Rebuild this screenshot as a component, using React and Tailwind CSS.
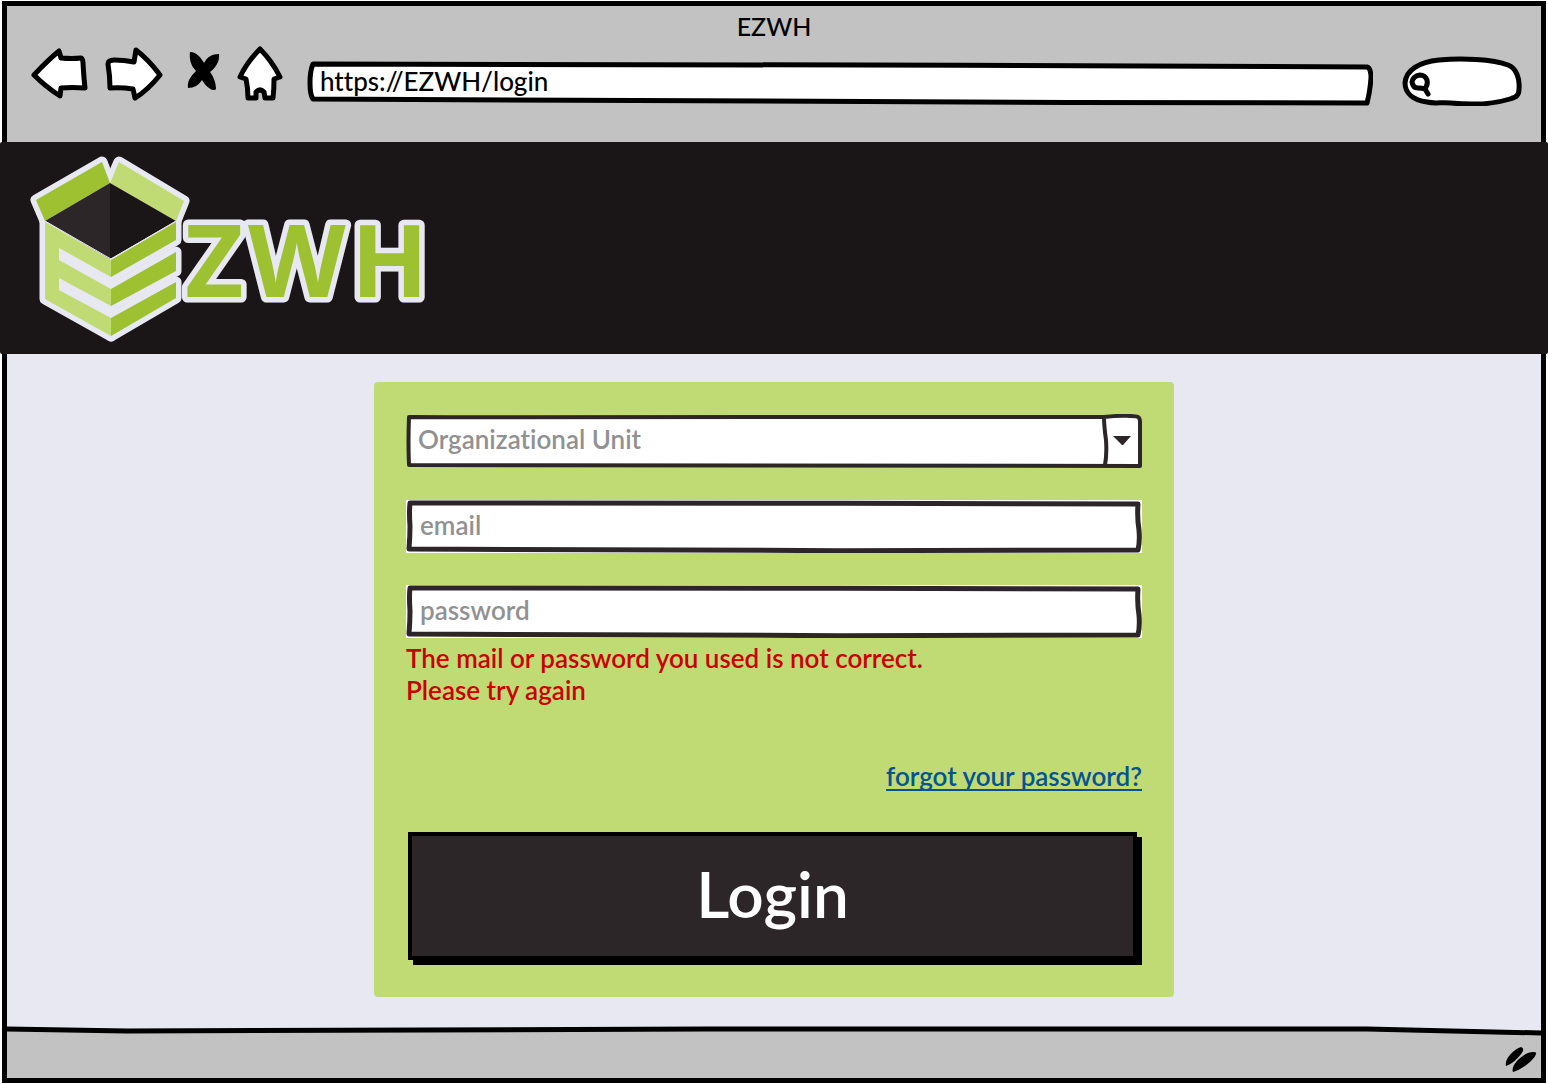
const ink = "#2d2628";

function SketchFrame({ width, height, d, stroke, strokeWidth }) {
  return (
    <svg
      className="pointer-events-none absolute inset-0 h-full w-full"
      viewBox={`0 0 ${width} ${height}`}
      preserveAspectRatio="none"
      aria-hidden="true"
    >
      <path
        d={d}
        fill="#fff"
        stroke={stroke}
        strokeWidth={strokeWidth}
        strokeLinejoin="round"
        vectorEffect="non-scaling-stroke"
      />
    </svg>
  );
}

function NavIcon({ viewBox, className, d, solid }) {
  return (
    <svg className={className} viewBox={viewBox} aria-hidden="true">
      <path
        d={d}
        fill={solid ? "#000" : "#fff"}
        stroke="#000"
        strokeWidth={solid ? 0 : 5}
        strokeLinejoin="round"
      />
    </svg>
  );
}

function BrowserBar() {
  return (
    <header className="h-34 bg-[#c2c2c2] pt-1">
      <h1 className="text-center text-[25px] leading-8 font-medium">EZWH</h1>
      <div className="mt-1 flex h-15 items-stretch pr-[18px] pl-6">
        <button type="button" aria-label="Back" className="mr-4">
          <NavIcon
            className="h-15 w-[58px]"
            viewBox="31 46 58 60"
            d="M34 75Q47 61 59 51L61 58Q72 59 81 58Q83 59 83 63Q84 80 85 88Q72 87 61 88L60 96Q46 87 34 75Z"
          />
        </button>
        <button type="button" aria-label="Forward" className="mr-6">
          <NavIcon
            className="h-15 w-[58px]"
            viewBox="105 46 58 60"
            d="M108 64Q108 60 114 60Q124 60 134 62L136 50Q149 60 160 75Q148 90 135 98L133 89Q121 87 110 88Q110 76 108 64Z"
          />
        </button>
        <button type="button" aria-label="Stop" className="mr-4">
          <NavIcon
            solid
            className="h-15 w-[34px]"
            viewBox="187 46 34 60"
            d="M190 52C197 52 201 58 204 63C207 57 212 54 219 54C220 62 215 68 210 72C213 76 216 82 216 89C215 91 211 90 209 88C206 86 203 82 202 80C199 85 194 88 188 88C187 81 191 76 196 71C191 66 189 59 190 52Z"
          />
        </button>
        <button type="button" aria-label="Home" className="mr-6">
          <NavIcon
            className="h-15 w-[46px]"
            viewBox="237 46 46 60"
            d="M260 49Q272 61 280 77L274 79Q274 90 273 98H265L264 92Q260 88 256 92L256 98H248Q248 88 246 79L240 77Q247 62 260 49Z"
          />
        </button>
        <div className="relative flex-1">
          <SketchFrame
            width={1067}
            height={60}
            stroke="#000"
            strokeWidth={5}
            d="M6 18C400 17 700 20 1061 21Q1065 22 1065 32Q1064 46 1061 57C700 57 300 54 6 53Q3 49 3 37Q3 25 6 18Z"
          />
          <input
            aria-label="Address"
            type="text"
            defaultValue="https://EZWH/login"
            className="relative h-full w-full bg-transparent pt-2.5 pr-3 pl-[13px] text-[26px] font-medium outline-none"
          />
        </div>
        <div className="relative ml-7 w-[122px]">
          <SketchFrame
            width={122}
            height={60}
            stroke="#000"
            strokeWidth={5}
            d="M4 37C5 24 18 16 38 14C60 12 92 13 107 19C115 22 119 32 118 43C118 50 115 51 109 53C93 58 70 59 50 57C40 56 34 58 26 56C12 54 4 47 4 37Z"
          />
          <svg className="pointer-events-none absolute inset-0 h-15 w-[122px]" viewBox="1402 46 122 60" aria-hidden="true">
            <path
              d="M1427 87Q1429 84 1428 80Q1426 75 1421 75Q1414 76 1413 82Q1414 88 1419 88Q1423 88 1426 89L1429 94"
              fill="#fff"
              stroke="#000"
              strokeWidth="5"
              strokeLinecap="round"
              strokeLinejoin="round"
            />
          </svg>
          <input
            aria-label="Search"
            type="search"
            className="relative h-full w-full bg-transparent pt-3 pr-4 pl-8 text-base outline-none"
          />
        </div>
      </div>
    </header>
  );
}

function Logo() {
  return (
    <svg className="h-[190px] w-[398px]" viewBox="30 154 398 190" role="img" aria-label="EZWH">
      <g stroke="#e8e8f3" strokeWidth="11" strokeLinejoin="round" fill="#e8e8f3">
        <path d="M102 162L36 200L45 221L110 183Z" />
        <path d="M119 162L184 201L176 221L110 183Z" />
        <path d="M45 222L110 259L176 222V240L111 277V336L45 299Z" />
        <path d="M111 289L176 252V271L111 306Z" />
        <path d="M111 318L176 282V298L111 336Z" />
      </g>
      <path d="M102 162L36 200L45 221L110 183Z" fill="#9dc131" />
      <path d="M119 162L184 201L176 221L110 183Z" fill="#c1db74" />
      <path d="M110 183L45 221L110 259Z" fill="#2d2628" />
      <path d="M110 183L176 221L110 259Z" fill="#1a1617" />
      <path d="M45 222L111 260V277L59 248V260L111 289V306L59 278V290L111 318V336L45 299Z" fill="#c1db74" />
      <path d="M111 260L176 222V240L111 277ZM111 289L176 252V271L111 306ZM111 318L176 282V298L111 336Z" fill="#9dc131" />
      <path d="M45 221L111 259L176 221" fill="none" stroke="#e8e8f3" strokeWidth="1" />
      <text
        x="185 248 351"
        y="297"
        fontFamily="'Open Sans', sans-serif"
        fontWeight="700"
        fontSize="101"
        fill="#9dc131"
        stroke="#e8e8f3"
        strokeWidth="11"
        strokeLinejoin="round"
        paintOrder="stroke"
      >
        ZWH
      </text>
    </svg>
  );
}

function TextField({ label, type }) {
  return (
    <div className="relative h-[53px] bg-white">
      <SketchFrame
        width={736}
        height={53}
        stroke={ink}
        strokeWidth={5}
        d="M4 3C200 2 500 4 732 4Q731 18 733 30Q734 42 732 50C500 51 200 51 3 49Q4 36 4 26Q3 12 4 3Z"
      />
      <input
        aria-label={label}
        type={type}
        placeholder={label}
        className="relative h-full w-full bg-transparent px-3.5 pb-1 text-[26px] outline-none placeholder:text-[#919191] placeholder:opacity-100"
      />
    </div>
  );
}

function LoginForm() {
  return (
    <form className="flex w-full max-w-[800px] flex-col rounded-sm bg-[#c1db74] p-8" onSubmit={(e) => e.preventDefault()}>
      <div className="relative h-[54px]">
        <SketchFrame
          width={736}
          height={54}
          stroke={ink}
          strokeWidth={4}
          d="M3 3C250 4 500 3 698 3C715 1 730 2 732 3Q734 4 734 8V52C500 51 250 52 3 51Q2 28 3 3ZM698 3Q698 12 700 26Q701 40 699 51"
        />
        <select
          aria-label="Organizational Unit"
          defaultValue=""
          className="relative h-full w-full appearance-none bg-transparent pr-12 pb-1 pl-3 text-[26px] text-[#919191] outline-none"
        >
          <option value="">Organizational Unit</option>
        </select>
        <svg className="pointer-events-none absolute top-5 right-2.5 h-3 w-5" viewBox="0 0 20 12" aria-hidden="true">
          <path d="M1 2H19L11 11H10Z" fill={ink} />
        </svg>
      </div>
      <div className="mt-8">
        <TextField type="email" label="email" />
      </div>
      <div className="mt-8">
        <TextField type="password" label="password" />
      </div>
      <p role="alert" className="mt-1 text-[26px] leading-8 text-[#cc0000]">
        The mail or password you used is not correct.
        <br />
        Please try again
      </p>
      <a
        href="#forgot"
        className="mt-[54px] self-end text-[26px] leading-8 text-[#045491] underline decoration-2 underline-offset-3 [text-decoration-skip-ink:none]"
      >
        forgot your password?
      </a>
      <button
        type="submit"
        className="mt-10 mr-[5px] mb-[5px] ml-0.5 h-32 border-4 border-black bg-[#2d2628] pb-1 text-[64px] leading-none text-white shadow-[5px_5px_0_#000]"
      >
        Login
      </button>
    </form>
  );
}

function StatusBar() {
  return (
    <footer className="relative flex h-12 items-center justify-end bg-[#c2c2c2] pr-1">
      <svg
        className="pointer-events-none absolute inset-x-0 -top-1 h-3 w-full"
        viewBox="0 0 1534 12"
        preserveAspectRatio="none"
        aria-hidden="true"
      >
        <path d="M0 0H1534V7L1360 3H700L120 5L0 3Z" fill="#e8e8f3" />
        <path
          d="M0 3L120 5L700 3H1360L1534 7"
          fill="none"
          stroke="#000"
          strokeWidth="5"
          vectorEffect="non-scaling-stroke"
        />
      </svg>
      <svg className="mt-3 h-7 w-8" viewBox="1505 1045 32 28" aria-hidden="true">
        <path d="M1506 1065C1504 1058 1514 1048 1521 1046Q1524 1047 1523 1050C1520 1056 1512 1063 1506 1065ZM1513 1071C1510 1064 1524 1051 1533 1051Q1537 1051 1536 1053C1533 1061 1520 1069 1513 1071Z" />
      </svg>
    </footer>
  );
}

export default function App() {
  return (
    <div className="flex min-h-screen flex-col bg-white px-0.5 pt-px pb-px font-['Lato',sans-serif] font-semibold text-black [font-variant-ligatures:none]">
      <div className="flex flex-1 flex-col border-5 border-black">
        <BrowserBar />
        <div className="-mx-[7px] flex h-53 items-center rounded-xs bg-[#1a1617] pt-1 pb-0.5 pl-[30px]">
          <Logo />
        </div>
        <main className="flex flex-1 items-start justify-center bg-[#e8e8f3] pt-7 pb-8">
          <LoginForm />
        </main>
        <StatusBar />
      </div>
    </div>
  );
}
